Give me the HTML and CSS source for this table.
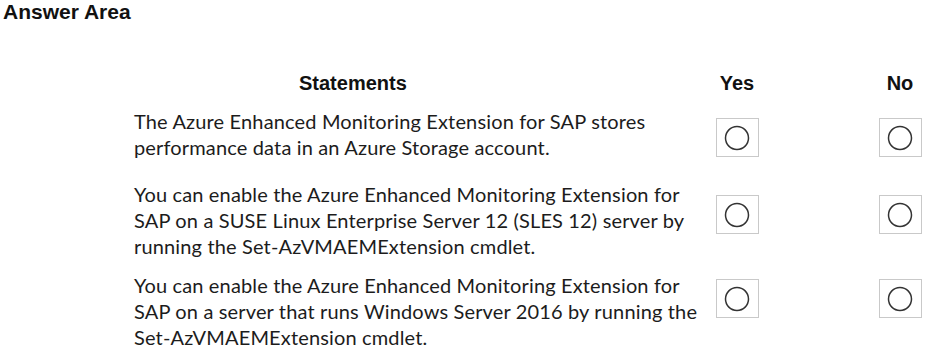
FILE: index.html
```html
<!DOCTYPE html>
<html lang="en">
<head>
  <meta charset="UTF-8">
  <title>Answer Area</title>
  <link rel="stylesheet" href="styles.css">
</head>
<body>

<h1 class="area-title">Answer Area</h1>

<div class="answers">
  <div class="row head">
    <div class="statement">Statements</div>
    <div class="choice">Yes</div>
    <div class="choice no">No</div>
  </div>

  <div class="row row-1">
    <div class="statement">
      The Azure Enhanced Monitoring Extension for SAP stores<br>
      performance data in an Azure Storage account.
    </div>
    <div class="choice"><span class="radio"><svg viewBox="0 0 26 26" width="26" height="26"><circle cx="13" cy="13" r="11.5"/></svg></span></div>
    <div class="choice no"><span class="radio"><svg viewBox="0 0 26 26" width="26" height="26"><circle cx="13" cy="13" r="11.5"/></svg></span></div>
  </div>

  <div class="row row-2">
    <div class="statement">
      You can enable the Azure Enhanced Monitoring Extension for<br>
      SAP on a SUSE Linux Enterprise Server 12 (SLES 12) server by<br>
      running the Set-AzVMAEMExtension cmdlet.
    </div>
    <div class="choice"><span class="radio"><svg viewBox="0 0 26 26" width="26" height="26"><circle cx="13" cy="13" r="11.5"/></svg></span></div>
    <div class="choice no"><span class="radio"><svg viewBox="0 0 26 26" width="26" height="26"><circle cx="13" cy="13" r="11.5"/></svg></span></div>
  </div>

  <div class="row row-3">
    <div class="statement">
      You can enable the Azure Enhanced Monitoring Extension for<br>
      SAP on a server that runs Windows Server 2016 by running the<br>
      Set-AzVMAEMExtension cmdlet.
    </div>
    <div class="choice"><span class="radio"><svg viewBox="0 0 26 26" width="26" height="26"><circle cx="13" cy="13" r="11.5"/></svg></span></div>
    <div class="choice no"><span class="radio"><svg viewBox="0 0 26 26" width="26" height="26"><circle cx="13" cy="13" r="11.5"/></svg></span></div>
  </div>
</div>

</body>
</html>
```

FILE: styles.css
```css
* {
  box-sizing: border-box;
}

body {
  margin: 0;
  background: #fff;
  color: #1c1c1c;
  font-family: 'Liberation Sans', Arial, sans-serif;
  overflow: hidden;
}

.area-title {
  margin: 0;
  padding-left: 3px;
  font-size: 21px;
  line-height: 24px;
  font-weight: 700;
  color: #111;
}

.answers {
  padding-left: 134px;
}

.row {
  display: flex;
  align-items: flex-start;
}

.statement {
  flex: 0 0 571px;
  font-family: 'Lato', 'Liberation Sans', sans-serif;
  font-size: 20px;
  line-height: 26px;
  letter-spacing: 0.15px;
}

.choice {
  flex: 0 0 64px;
  display: flex;
  justify-content: center;
}

.choice.no {
  margin-left: 99px;
}

/* header row */
.head {
  margin-top: 47px;
  font-size: 20px;
  line-height: 24px;
  font-weight: 700;
  color: #111;
}

.head .statement {
  font-family: 'Liberation Sans', Arial, sans-serif;
  font-size: 20px;
  line-height: 24px;
  letter-spacing: 0;
  padding-left: 165px;
}

.radio {
  display: flex;
  align-items: center;
  justify-content: center;
  width: 43px;
  height: 39px;
  border: 1px solid #c9c9c9;
}

.radio circle {
  fill: none;
  stroke: #333;
  stroke-width: 1.5;
}

/* rows don't share one vertical rhythm in the original */
.row-1 { margin-top: 13px; }
.row-1 .radio { margin-top: 10px; }

.row-2 { margin-top: 21px; }
.row-2 .radio { margin-top: 14px; }

.row-3 { margin-top: 13px; }
.row-3 .radio { margin-top: 7px; }
```
